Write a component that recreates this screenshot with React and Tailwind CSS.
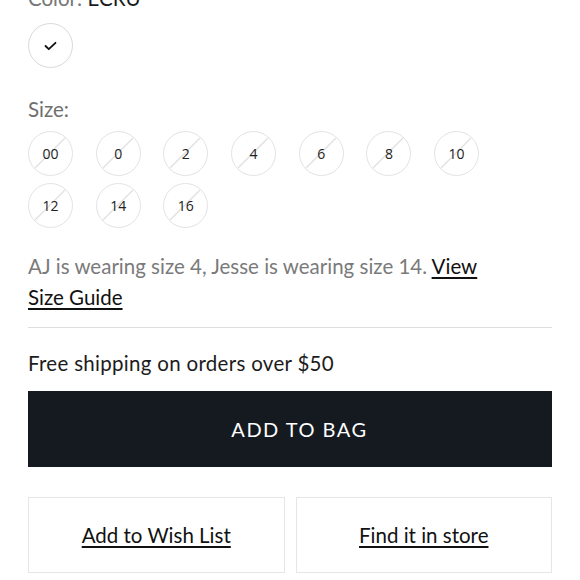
import React from "react";

const sizes1 = ["00", "0", "2", "4", "6", "8", "10"];
const sizes2 = ["12", "14", "16"];

function SizeCircle({ label }) {
  return (
    <div className="relative w-[45px] h-[45px] rounded-full border-[1.5px] border-[#e3e3e3] flex items-center justify-center overflow-hidden">
      <svg className="absolute inset-0" width="42" height="42" viewBox="0 0 42 42">
        <line x1="6" y1="36" x2="36" y2="6" stroke="#e0e0e0" strokeWidth="1.3" />
      </svg>
      <span className="relative text-[14px] text-[#222] font-['Open_Sans',sans-serif]">{label}</span>
    </div>
  );
}

export default function App() {
  return (
    <div className="w-[580px] h-[580px] overflow-hidden bg-white px-[28px] font-['Lato',sans-serif]">
      <div className="-mt-[16px] text-[20.5px] leading-[28px] text-[#777]">
        Color: <span className="text-[#1a1a1a]">ECRU</span>
      </div>
      <div className="mt-[11px] w-[45px] h-[45px] rounded-full border-[1.5px] border-[#d9d9d9] flex items-center justify-center">
        <svg width="13" height="10" viewBox="0 0 13 10">
          <path d="M1.5 5 L4.8 8.2 L11.5 1.8" fill="none" stroke="#111" strokeWidth="1.8" strokeLinecap="round" strokeLinejoin="round" />
        </svg>
      </div>
      <div className="mt-[27px] text-[20.5px] leading-[28px] text-[#6f6f6f]">Size:</div>
      <div className="mt-[8px] flex flex-col gap-[7px]">
        <div className="flex gap-x-[22.7px]">
          {sizes1.map((s) => (
            <SizeCircle key={s} label={s} />
          ))}
        </div>
        <div className="flex gap-x-[22.7px]">
          {sizes2.map((s) => (
            <SizeCircle key={s} label={s} />
          ))}
        </div>
      </div>
      <p className="mt-[23px] max-w-[480px] text-[20.5px] leading-[31px] text-[#7a7a7a]">
        AJ is wearing size 4, Jesse is wearing size 14.{" "}
        <span className="text-[#111] underline underline-offset-[3px]">View Size Guide</span>
      </p>
      <div className="mt-[14px] h-px bg-[#dedede]" />
      <div className="mt-[21px] text-[20.5px] leading-[28px] tracking-[0.3px] text-[#1c1c1c]">Free shipping on orders over $50</div>
      <button className="mt-[14px] w-full h-[76px] bg-[#141a20] text-white text-[20px] tracking-[1.5px] pl-[19px] flex items-center justify-center">
        ADD TO BAG
      </button>
      <div className="mt-[30px] grid grid-cols-2 gap-[11px]">
        <div className="h-[76px] border-[1.5px] border-[#e6e6e6] flex items-center justify-center">
          <span className="text-[20.5px] text-[#111] underline underline-offset-[3px]">Add to Wish List</span>
        </div>
        <div className="h-[76px] border-[1.5px] border-[#e6e6e6] flex items-center justify-center">
          <span className="text-[20.5px] text-[#111] underline underline-offset-[3px]">Find it in store</span>
        </div>
      </div>
    </div>
  );
}
